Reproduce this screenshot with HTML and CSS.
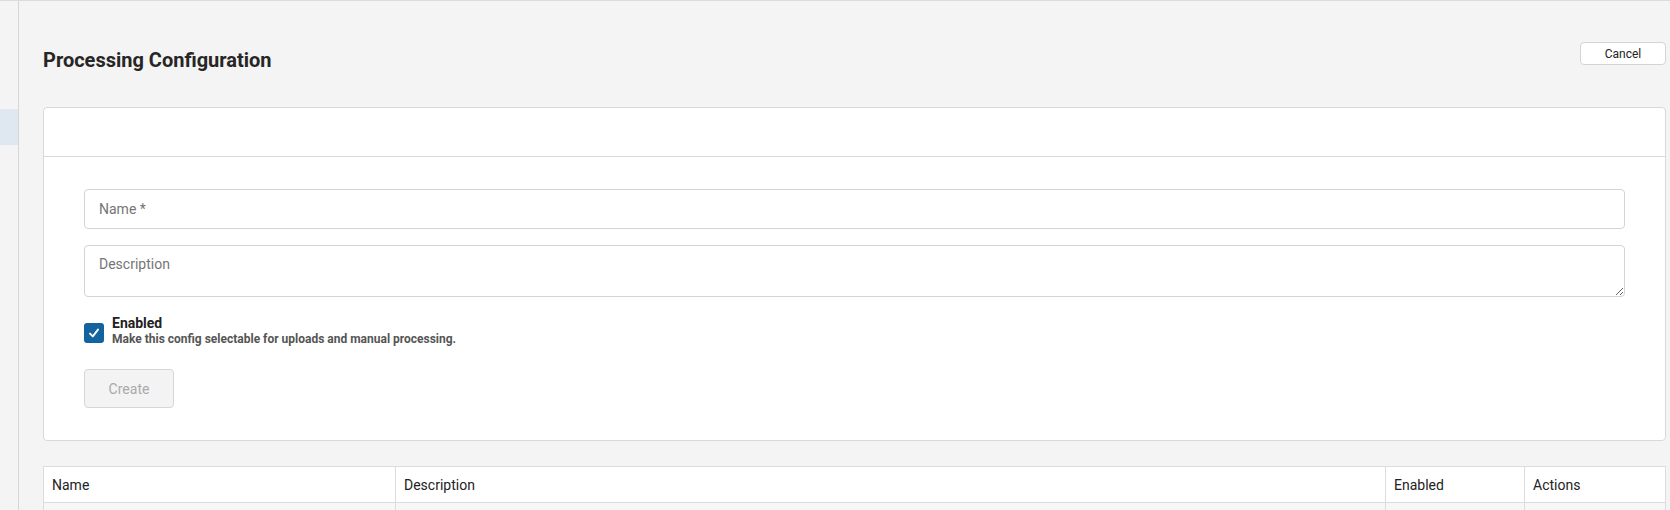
FILE: index.html
```html
<!DOCTYPE html>
<html lang="en">
<head>
    <meta charset="UTF-8">
    <meta name="viewport" content="width=device-width, initial-scale=1.0">
    <title>Processing Configuration</title>
    <link rel="stylesheet" href="styles.css">
</head>
<body>

<div class="layout">
    <!-- Collapsed side navigation -->
    <aside class="sidebar">
        <div class="nav-item active"></div>
    </aside>

    <main class="main">
        <div class="page-header">
            <h1 class="page-title">Processing Configuration</h1>
            <button class="btn-cancel" type="button">Cancel</button>
        </div>

        <!-- Create form -->
        <section class="card">
            <div class="card-header"></div>
            <form class="card-body">
                <input class="field" type="text" placeholder="Name *">
                <textarea class="field field-area" placeholder="Description"></textarea>

                <label class="check-row">
                    <span class="checkbox">
                        <svg width="14" height="14" viewBox="0 0 14 14">
                            <path d="M3 7.6 L5.8 10.4 L11 3.6" fill="none" stroke="#fff" stroke-width="1.9" stroke-linecap="round" stroke-linejoin="round"/>
                        </svg>
                    </span>
                    <span class="check-text">
                        <strong>Enabled</strong>
                        <small>Make this config selectable for uploads and manual processing.</small>
                    </span>
                </label>

                <button class="btn-create" type="button" disabled>Create</button>
            </form>
        </section>

        <!-- Existing configs -->
        <table class="config-table">
            <colgroup>
                <col style="width: 352px">
                <col style="width: 990px">
                <col style="width: 139px">
                <col>
            </colgroup>
            <thead>
                <tr>
                    <th>Name</th>
                    <th>Description</th>
                    <th>Enabled</th>
                    <th>Actions</th>
                </tr>
            </thead>
            <tbody>
                <tr>
                    <td></td>
                    <td></td>
                    <td></td>
                    <td></td>
                </tr>
            </tbody>
        </table>
    </main>
</div>

</body>
</html>
```

FILE: styles.css
```css
body {
    margin: 0;
    padding: 0;
    background-color: #f4f4f4;
    font-family: 'Roboto', 'Liberation Sans', sans-serif;
    color: #222;
    overflow: hidden;
}

.layout {
    display: flex;
    height: 510px;
    overflow: hidden;
    box-sizing: border-box;
    border-top: 1px solid #dcdcdc;
}

/* Sidebar */
.sidebar {
    width: 18px;
    flex-shrink: 0;
    border-right: 1px solid #d6d6d6;
    padding-top: 108px;
}

.nav-item {
    height: 36px;
}

.nav-item.active {
    background-color: #dfe7f1;
}

/* Main area */
.main {
    flex: 1;
    padding: 41px 4px 0 24px;
    min-width: 0;
}

.page-header {
    display: flex;
    justify-content: space-between;
    align-items: flex-start;
}

.page-title {
    margin: 6px 0 0;
    font-size: 20px;
    line-height: 25px;
    font-weight: 700;
    color: #262626;
}

.btn-cancel {
    width: 86px;
    height: 23px;
    background-color: #ffffff;
    border: 1px solid #d4d4d4;
    border-radius: 4px;
    font-family: inherit;
    font-size: 12px;
    color: #222;
    cursor: pointer;
}

/* Card */
.card {
    margin-top: 34px;
    background-color: #ffffff;
    border: 1px solid #d9d9d9;
    border-radius: 4px;
}

.card-header {
    height: 48px;
    border-bottom: 1px solid #d9d9d9;
}

.card-body {
    display: flex;
    flex-direction: column;
    align-items: flex-start;
    padding: 32px 40px 32px 40px;
}

.field {
    box-sizing: border-box;
    width: 100%;
    height: 40px;
    padding: 0 14px;
    border: 1px solid #d4d4d4;
    border-radius: 4px;
    font-family: inherit;
    font-size: 14px;
    color: #222;
    background-color: #ffffff;
}

.field::placeholder {
    color: #757575;
}

.field-area {
    margin-top: 16px;
    height: 52px;
    padding-top: 10px;
    resize: vertical;
}

.check-row {
    display: flex;
    align-items: flex-start;
    gap: 8px;
    margin-top: 18px;
}

.checkbox {
    width: 20px;
    height: 20px;
    margin-top: 8px;
    border-radius: 3px;
    background-color: #13639e;
    display: flex;
    align-items: center;
    justify-content: center;
}

.check-text {
    display: flex;
    flex-direction: column;
}

.check-text strong {
    font-size: 14px;
    line-height: 17px;
    color: #222;
}

.check-text small {
    font-size: 12px;
    line-height: 15px;
    font-weight: 700;
    color: #555;
}

.btn-create {
    margin-top: 22px;
    width: 90px;
    height: 39px;
    background-color: #f3f3f3;
    border: 1px solid #d6d6d6;
    border-radius: 4px;
    font-family: inherit;
    font-size: 14px;
    color: #aaaaaa;
}

/* Table */
.config-table {
    width: 100%;
    margin-top: 25px;
    border-collapse: collapse;
    table-layout: fixed;
    background-color: #ffffff;
}

.config-table th, .config-table td {
    border: 1px solid #dcdcdc;
    text-align: left;
    padding: 0 8px;
}

.config-table th {
    height: 35px;
    font-size: 14px;
    font-weight: 400;
    color: #222;
}

.config-table td {
    height: 36px;
    background-color: #f7f7f7;
}
```
